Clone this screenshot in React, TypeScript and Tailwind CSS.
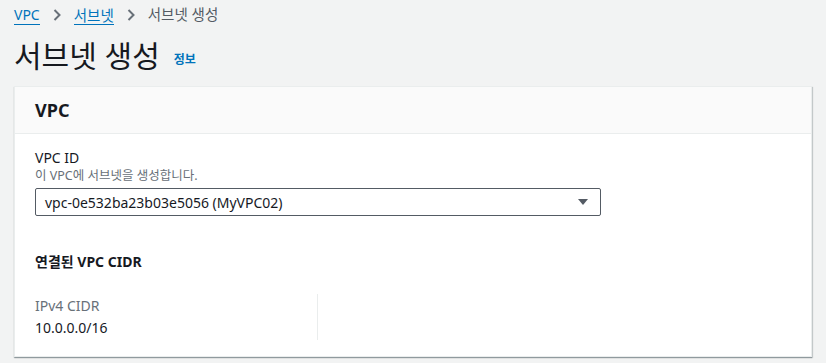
import React from "react"

const font = { fontFamily: '"Noto Sans", "Noto Sans CJK KR", sans-serif' }

export default function App() {
  return (
    <div className="min-h-[363px] w-[826px] bg-[#f2f3f3] px-[14px] pt-[4px] text-[#16191f]" style={font}>
      <nav className="flex h-[22px] items-center gap-[12px] text-[14px]">
        <a className="border-b border-[#0073bb] leading-[18px] text-[#0073bb]">VPC</a>
        <svg width="10" height="14" viewBox="0 0 10 14">
          <path d="M2.5 2 L7.5 7 L2.5 12" fill="none" stroke="#687078" strokeWidth="2" />
        </svg>
        <a className="border-b border-[#0073bb] text-[14.5px] leading-[18px] text-[#0073bb]">서브넷</a>
        <svg width="10" height="14" viewBox="0 0 10 14">
          <path d="M2.5 2 L7.5 7 L2.5 12" fill="none" stroke="#687078" strokeWidth="2" />
        </svg>
        <span className="text-[14.5px] text-[#545b64]">서브넷 생성</span>
      </nav>

      <div className="mt-[10px] flex h-[40px] items-center gap-[14px]">
        <h1 className="text-[30px] font-normal leading-none">서브넷 생성</h1>
        <a className="mt-[8px] text-[12px] font-bold text-[#0073bb]">정보</a>
      </div>

      <section className="mt-[10px] border border-[#eaeded] bg-white shadow-[0_1px_1px_0_rgba(0,28,36,0.3),1px_1px_1px_0_rgba(0,28,36,0.15)]">
        <div className="flex h-[47px] items-center border-b border-[#eaeded] bg-[#fafafa] px-[20px]">
          <h2 className="text-[18px] font-bold">VPC</h2>
        </div>
        <div className="px-[20px] pb-[16px] pt-[14px]">
          <div className="text-[14px] leading-[20px]">VPC ID</div>
          <div className="text-[12.5px] leading-[16px] text-[#687078]">이 VPC에 서브넷을 생성합니다.</div>
          <div className="mt-[4px] flex h-[28px] w-[566px] items-center justify-between rounded-[2px] border border-[#545b64] pl-[9px] pr-[12px] text-[14px]">
            <span>vpc-0e532ba23b03e5056 (MyVPC02)</span>
            <svg width="10" height="7" viewBox="0 0 10 7">
              <path d="M0 0 H10 L5 6 Z" fill="#545b64" />
            </svg>
          </div>

          <h3 className="mt-[36px] text-[14px] font-bold leading-[20px]">연결된 VPC CIDR</h3>
          <div className="mt-[22px] grid grid-cols-[283px_1fr]">
            <div className="border-r border-[#eaeded] py-[2px]">
              <div className="text-[14px] leading-[20px] text-[#687078]">IPv4 CIDR</div>
              <div className="mt-[2px] text-[14px] leading-[20px]">10.0.0.0/16</div>
            </div>
            <div />
          </div>
        </div>
      </section>
    </div>
  )
}
